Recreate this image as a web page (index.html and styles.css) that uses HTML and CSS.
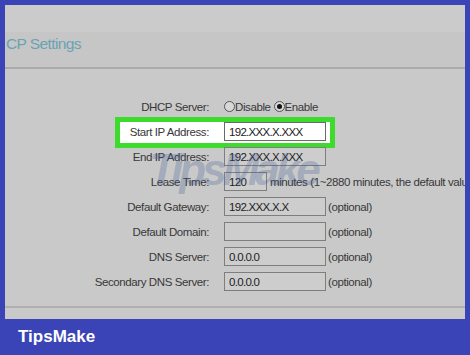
FILE: index.html
```html
<!DOCTYPE html>
<html>
<head>
<meta charset="utf-8">
<link rel="stylesheet" href="styles.css">
</head>
<body>
<div class="panel">
  <div class="topband"></div>
  <div class="header">CP Settings</div>
  <div class="form">
    <div class="row">
      <label class="lbl">DHCP Server:</label>
      <div class="ctl">
        <span class="radio"></span><span class="rtext">Disable</span><span class="radio on"></span><span class="rtext">Enable</span>
      </div>
    </div>
    <div class="row hl">
      <label class="lbl">Start IP Address:</label>
      <div class="ctl"><input class="box white" value="192.XXX.X.XXX"></div>
    </div>
    <div class="row">
      <label class="lbl">End IP Address:</label>
      <div class="ctl"><input class="box" value="192.XXX.X.XXX"></div>
    </div>
    <div class="row">
      <label class="lbl">Lease Time:</label>
      <div class="ctl"><input class="box short" value="120"><span class="note">minutes (1~2880 minutes, the default value is 120)</span></div>
    </div>
    <div class="row">
      <label class="lbl">Default Gateway:</label>
      <div class="ctl"><input class="box" value="192.XXX.X.X"><span class="opt">(optional)</span></div>
    </div>
    <div class="row">
      <label class="lbl">Default Domain:</label>
      <div class="ctl"><input class="box" value=""><span class="opt">(optional)</span></div>
    </div>
    <div class="row">
      <label class="lbl">DNS Server:</label>
      <div class="ctl"><input class="box" value="0.0.0.0"><span class="opt">(optional)</span></div>
    </div>
    <div class="row">
      <label class="lbl">Secondary DNS Server:</label>
      <div class="ctl"><input class="box" value="0.0.0.0"><span class="opt">(optional)</span></div>
    </div>
    <div class="watermark">TipsMake</div>
  </div>
  <div class="bottom"></div>
</div>
<div class="brand">TipsMake</div>
</body>
</html>
```

FILE: styles.css
```css
html, body {
  margin: 0;
  padding: 0;
}
body {
  width: 470px;
  height: 355px;
  background: #3a44b6;
  font-family: "Liberation Sans", Arial, sans-serif;
  overflow: hidden;
}
.panel {
  margin: 5px 5px 0 5px;
  height: 314px;
  background: #c9c9c9;
  display: flex;
  flex-direction: column;
  overflow: hidden;
}
.topband {
  height: 27px;
  background: #cbcbcb;
}
.header {
  height: 35px;
  background: #c6c6c6;
  border-bottom: 2px solid #aaaaaa;
  color: #6aa3b2;
  font-size: 15.5px;
  letter-spacing: -0.6px;
  line-height: 23px;
  padding-left: 1px;
}
.form {
  position: relative;
  isolation: isolate;
  flex: 1;
  padding: 28px 0 15px 0;
  display: flex;
  flex-direction: column;
  gap: 6px;
}
.row {
  position: relative;
  display: grid;
  grid-template-columns: 204px 1fr;
  column-gap: 15px;
  height: 19px;
  align-items: center;
}
.row.hl::before {
  content: "";
  position: absolute;
  left: 110px;
  width: 220px;
  top: -5px;
  bottom: -7px;
  box-sizing: border-box;
  border: 5px solid #3ddc2c;
  background: #ffffff;
  z-index: -1;
}
.lbl {
  text-align: right;
  font-size: 11.5px;
  letter-spacing: -0.4px;
  color: #383838;
  white-space: nowrap;
}
.ctl {
  display: flex;
  align-items: center;
  height: 19px;
  white-space: nowrap;
  font-size: 11.5px;
  color: #383838;
  letter-spacing: -0.4px;
}
.box {
  box-sizing: border-box;
  width: 102px;
  height: 19px;
  margin: 0;
  padding: 0 0 0 4px;
  border: 1px solid #7e7e7e;
  background: #cdcdcd;
  font-family: "Liberation Sans", Arial, sans-serif;
  font-size: 11.5px;
  letter-spacing: -0.7px;
  color: #222222;
  outline: none;
}
.box.white {
  background: #ffffff;
  border-color: #6a6a6a;
}
.box.short {
  width: 43px;
}
.note {
  margin-left: 3px;
}
.opt {
  margin-left: 2px;
}
.radio {
  box-sizing: border-box;
  width: 11px;
  height: 11px;
  border: 1px solid #555555;
  border-radius: 50%;
  background: #d8d8d8;
  display: inline-flex;
  align-items: center;
  justify-content: center;
}
.radio.on::after {
  content: "";
  width: 5px;
  height: 5px;
  border-radius: 50%;
  background: #111111;
}
.rtext {
  margin-right: 3px;
}
.watermark {
  position: absolute;
  left: 144px;
  top: 76px;
  font-size: 44px;
  font-weight: bold;
  font-style: italic;
  letter-spacing: -4px;
  color: rgba(70, 95, 150, 0.3);
  pointer-events: none;
  z-index: 2;
}
.bottom {
  border-top: 2px solid #b0b0b0;
  height: 11px;
}
.brand {
  color: #ffffff;
  font-weight: bold;
  font-size: 17px;
  padding-left: 18px;
  line-height: 36px;
  height: 36px;
}
```
